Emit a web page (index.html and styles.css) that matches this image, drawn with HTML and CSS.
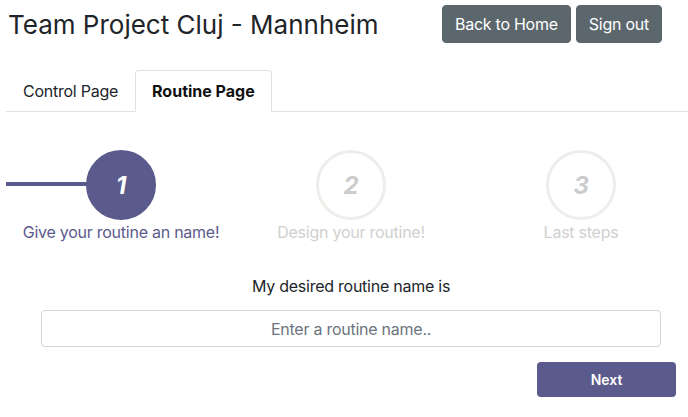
FILE: index.html
```html
<!DOCTYPE html>
<html lang="en">
<head>
<meta charset="utf-8">
<title>Team Project Cluj - Mannheim</title>
<link rel="stylesheet" href="styles.css">
</head>
<body>
<header class="header">
  <h1 class="title">Team Project Cluj - Mannheim</h1>
  <div class="actions">
    <button class="btn">Back to Home</button>
    <button class="btn">Sign out</button>
  </div>
</header>
<main class="container">
  <ul class="tabs">
    <li class="tab">Control Page</li>
    <li class="tab active">Routine Page</li>
  </ul>
  <div class="stepper">
    <div class="step active">
      <div class="bar"></div>
      <div class="circle">1</div>
      <div class="label">Give your routine an name!</div>
    </div>
    <div class="step">
      <div class="circle">2</div>
      <div class="label">Design your routine!</div>
    </div>
    <div class="step">
      <div class="circle">3</div>
      <div class="label">Last steps</div>
    </div>
  </div>
  <div class="form">
    <p class="prompt">My desired routine name is</p>
    <input class="name-input" type="text" placeholder="Enter a routine name..">
    <div class="form-actions">
      <button class="next">Next</button>
    </div>
  </div>
</main>
</body>
</html>
```

FILE: styles.css
```css
* { box-sizing: border-box; }
html, body { margin: 0; padding: 0; overflow: hidden; }
body {
  font-family: Inter, "Liberation Sans", sans-serif;
  font-size: 16px;
  letter-spacing: -0.25px;
  color: #212529;
  background: #fff;
  width: 688px;
  height: 417px;
}
.header {
  display: flex;
  justify-content: space-between;
  align-items: flex-start;
  padding: 5px 26px 0 8px;
  height: 70px;
}
.title {
  margin: 3px 0 0;
  font-size: 26px;
  font-weight: 400;
  line-height: 34px;
  letter-spacing: 0;
  color: #212529;
}
.actions { display: flex; gap: 5px; }
.btn {
  font-family: inherit;
  font-size: 16px;
  letter-spacing: -0.25px;
  line-height: 24px;
  padding: 6px 12px;
  border: 1px solid #5c666d;
  background: #5c666d;
  color: #fff;
  border-radius: 4px;
}
.container {
  width: 690px;
  margin-left: 6px;
}
.tabs {
  list-style: none;
  margin: 0;
  padding: 0;
  display: flex;
  border-bottom: 1px solid #dee2e6;
}
.tab {
  padding: 8px 16px;
  line-height: 24px;
  border: 1px solid transparent;
  border-top-left-radius: 4px;
  border-top-right-radius: 4px;
  margin-bottom: -1px;
  color: #212529;
}
.tab.active {
  font-weight: 700;
  letter-spacing: 0;
  border-color: #dee2e6 #dee2e6 #fff;
  background: #fff;
  color: #111;
}
.stepper {
  display: grid;
  grid-template-columns: 230px 230px 230px;
  margin-top: 38px;
}
.step {
  position: relative;
  display: flex;
  flex-direction: column;
  align-items: center;
}
.bar {
  position: absolute;
  left: 0;
  right: calc(50% + 34px);
  top: 32px;
  height: 4px;
  background: #5b5a8c;
}
.circle {
  width: 70px;
  height: 70px;
  border-radius: 50%;
  border: 3px solid #eeedea;
  display: flex;
  align-items: center;
  justify-content: center;
  font-size: 24px;
  font-weight: 700;
  font-style: italic;
  color: #cccccc;
}
.step.active .circle {
  background: #5b5a8c;
  border-color: #5b5a8c;
  color: #fff;
}
.label {
  margin-top: 0;
  font-size: 16px;
  line-height: 24px;
  color: #d0d0d0;
}
.step.active .label { color: #5b5a8c; }
.form {
  display: flex;
  flex-direction: column;
  align-items: center;
  padding: 0 35px;
}
.prompt {
  margin: 30px 0 12px;
  line-height: 24px;
  color: #212529;
}
.name-input {
  width: 100%;
  height: 37px;
  border: 1px solid #ced4da;
  border-radius: 4px;
  font-family: inherit;
  font-size: 16px;
  letter-spacing: -0.25px;
  text-align: center;
  color: #495057;
}
.name-input::placeholder { color: #6c757d; }
.form-actions {
  align-self: stretch;
  display: flex;
  justify-content: flex-end;
  margin-top: 15px;
  margin-right: -15px;
}
.next {
  width: 139px;
  height: 35px;
  border: none;
  border-radius: 4px;
  background: #5b5a8c;
  color: #fff;
  font-family: inherit;
  font-size: 14px;
  font-weight: 600;
}
```
